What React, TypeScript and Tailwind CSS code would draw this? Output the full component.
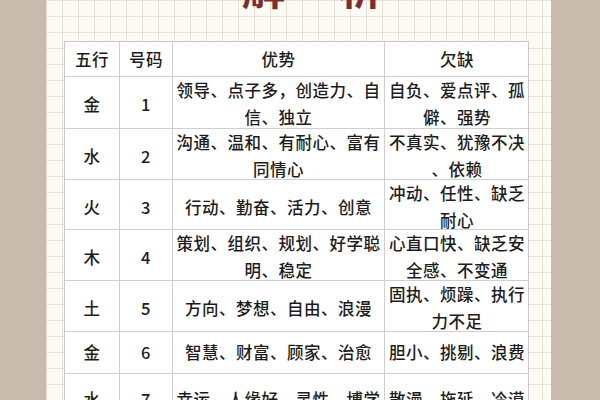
const ROWS = [
  { el: "金", no: "1", good: ["领导、点子多，创造力、自", "信、独立"], bad: ["自负、爱点评、孤", "僻、强势"], h: "h-[52px]" },
  { el: "水", no: "2", good: ["沟通、温和、有耐心、富有", "同情心"], bad: ["不真实、犹豫不决", "、依赖"], h: "h-[51px]" },
  { el: "火", no: "3", good: ["行动、勤奋、活力、创意"], bad: ["冲动、任性、缺乏", "耐心"], h: "h-[50px]" },
  { el: "木", no: "4", good: ["策划、组织、规划、好学聪", "明、稳定"], bad: ["心直口快、缺乏安", "全感、不变通"], h: "h-[51px]" },
  { el: "土", no: "5", good: ["方向、梦想、自由、浪漫"], bad: ["固执、烦躁、执行", "力不足"], h: "h-[51px]" },
  { el: "金", no: "6", good: ["智慧、财富、顾家、治愈"], bad: ["胆小、挑剔、浪费"], h: "h-[42px]" },
  { el: "水", no: "7", good: ["幸运、人缘好、灵性、博学"], bad: ["散漫、拖延、冷漠"], h: "h-[52px]" },
];

const cols = "grid grid-cols-[54px_53px_212px_145px]";
const cell = "flex flex-col items-center justify-center border-l border-[#cfcfcf] first:border-l-0 overflow-visible";

function Lines({ lines }: { lines: string[] }) {
  return (
    <div className="text-center leading-[27px]">
      {lines.map((l) => (
        <div key={l} className="whitespace-nowrap">{l}</div>
      ))}
    </div>
  );
}

export default function App() {
  return (
    <div
      className="flex h-[400px] w-[600px] justify-center overflow-hidden bg-[#c8bbad]"
      style={{ fontFamily: '"Noto Sans CJK SC", "Noto Sans", sans-serif' }}
    >
      <div className="ml-[-3px] flex h-full w-[505px] flex-col bg-[#fcfaf4] bg-[linear-gradient(to_right,#e9e1d3_1px,transparent_1px),linear-gradient(to_bottom,#e9e1d3_1px,transparent_1px)] bg-[size:16px_16px]">
        {/* title, cut off at the top */}
        <div className="mt-[-36px] flex h-[45px] justify-center gap-[53px] pl-[27px] text-[44px] font-bold leading-[44px] text-[#7b2d2d]">
          <span>解</span>
          <span>析</span>
        </div>

        {/* table */}
        <div className="ml-[18px] mt-[33px] w-[465px] border border-[#c9c9c9] bg-white text-[16.5px] font-medium tracking-[0.5px] text-[#1c1c1c]">
          <div className={`${cols} h-[34px]`}>
            <div className={cell}>五行</div>
            <div className={cell}>号码</div>
            <div className={cell}>优势</div>
            <div className={cell}>欠缺</div>
          </div>
          {ROWS.map((r, i) => (
            <div key={i} className={`${cols} ${r.h} border-t border-[#cfcfcf]`}>
              <div className={cell}>{r.el}</div>
              <div className={cell}>{r.no}</div>
              <div className={cell}>
                <Lines lines={r.good} />
              </div>
              <div className={cell}>
                <Lines lines={r.bad} />
              </div>
            </div>
          ))}
        </div>
      </div>
    </div>
  );
}
